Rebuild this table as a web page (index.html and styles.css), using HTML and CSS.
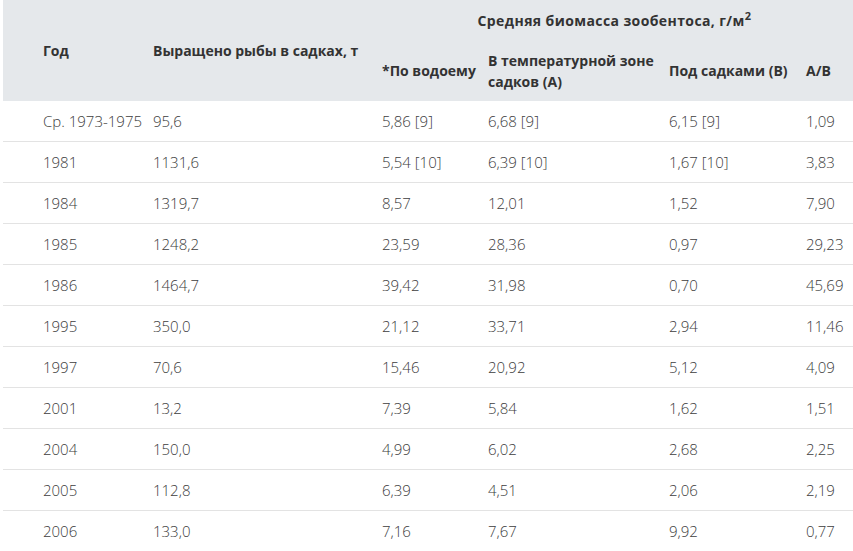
FILE: index.html
```html
<!DOCTYPE html>
<html lang="ru">
<head>
<meta charset="utf-8">
<link rel="stylesheet" href="styles.css">
</head>
<body>
<table class="data">
  <colgroup>
    <col class="c1"><col class="c2"><col class="c3"><col class="c4"><col class="c5"><col class="c6">
  </colgroup>
  <thead>
    <tr class="h1">
      <th rowspan="2" class="first">Год</th>
      <th rowspan="2">Выращено рыбы в садках, т</th>
      <th colspan="4" class="group">Средняя биомасса зообентоса, г/м<sup>2</sup></th>
    </tr>
    <tr class="h2">
      <th>*По водоему</th>
      <th>В температурной зоне садков (А)</th>
      <th>Под садками (В)</th>
      <th>А/В</th>
    </tr>
  </thead>
  <tbody>
    <tr><td class="first">Ср. 1973-1975</td><td>95,6</td><td>5,86 [9]</td><td>6,68 [9]</td><td>6,15 [9]</td><td>1,09</td></tr>
    <tr><td class="first">1981</td><td>1131,6</td><td>5,54 [10]</td><td>6,39 [10]</td><td>1,67 [10]</td><td>3,83</td></tr>
    <tr><td class="first">1984</td><td>1319,7</td><td>8,57</td><td>12,01</td><td>1,52</td><td>7,90</td></tr>
    <tr><td class="first">1985</td><td>1248,2</td><td>23,59</td><td>28,36</td><td>0,97</td><td>29,23</td></tr>
    <tr><td class="first">1986</td><td>1464,7</td><td>39,42</td><td>31,98</td><td>0,70</td><td>45,69</td></tr>
    <tr><td class="first">1995</td><td>350,0</td><td>21,12</td><td>33,71</td><td>2,94</td><td>11,46</td></tr>
    <tr><td class="first">1997</td><td>70,6</td><td>15,46</td><td>20,92</td><td>5,12</td><td>4,09</td></tr>
    <tr><td class="first">2001</td><td>13,2</td><td>7,39</td><td>5,84</td><td>1,62</td><td>1,51</td></tr>
    <tr><td class="first">2004</td><td>150,0</td><td>4,99</td><td>6,02</td><td>2,68</td><td>2,25</td></tr>
    <tr><td class="first">2005</td><td>112,8</td><td>6,39</td><td>4,51</td><td>2,06</td><td>2,19</td></tr>
    <tr><td class="first">2006</td><td>133,0</td><td>7,16</td><td>7,67</td><td>9,92</td><td>0,77</td></tr>
  </tbody>
</table>
</body>
</html>
```
FILE: styles.css
```css
html, body {
  margin: 0;
  padding: 0;
  background: #ffffff;
}
body {
  font-family: "Open Sans", "Noto Sans", sans-serif;
  color: #3d3d3d;
  overflow: hidden;
}
.data {
  margin-left: 3px;
  width: 860px;
  border-collapse: collapse;
  table-layout: fixed;
}
.c1 { width: 150px; }
.c2 { width: 229px; }
.c3 { width: 106px; }
.c4 { width: 181px; }
.c5 { width: 137px; }
.c6 { width: 57px; }

.data thead {
  background: #e5e8eb;
}
.data th {
  font-size: 14px;
  font-weight: 700;
  line-height: 21px;
  color: #333333;
  text-align: left;
  vertical-align: middle;
  padding: 0 2px 0 0;
}
.data th.first,
.data td.first {
  padding-left: 40px;
}
.h1 { height: 40px; }
.h2 { height: 61px; }
.data th.group {
  text-align: center;
  padding-right: 16px;
  letter-spacing: 0.4px;
}
.data sup {
  font-size: 11px;
  line-height: 0;
  vertical-align: 6px;
}
.data td {
  font-size: 15px;
  font-weight: 300;
  color: #3d3d3d;
  height: 40px;
  padding: 0 2px 0 0;
  vertical-align: middle;
  white-space: nowrap;
  border-bottom: 1px solid #e3e3e3;
}
```
